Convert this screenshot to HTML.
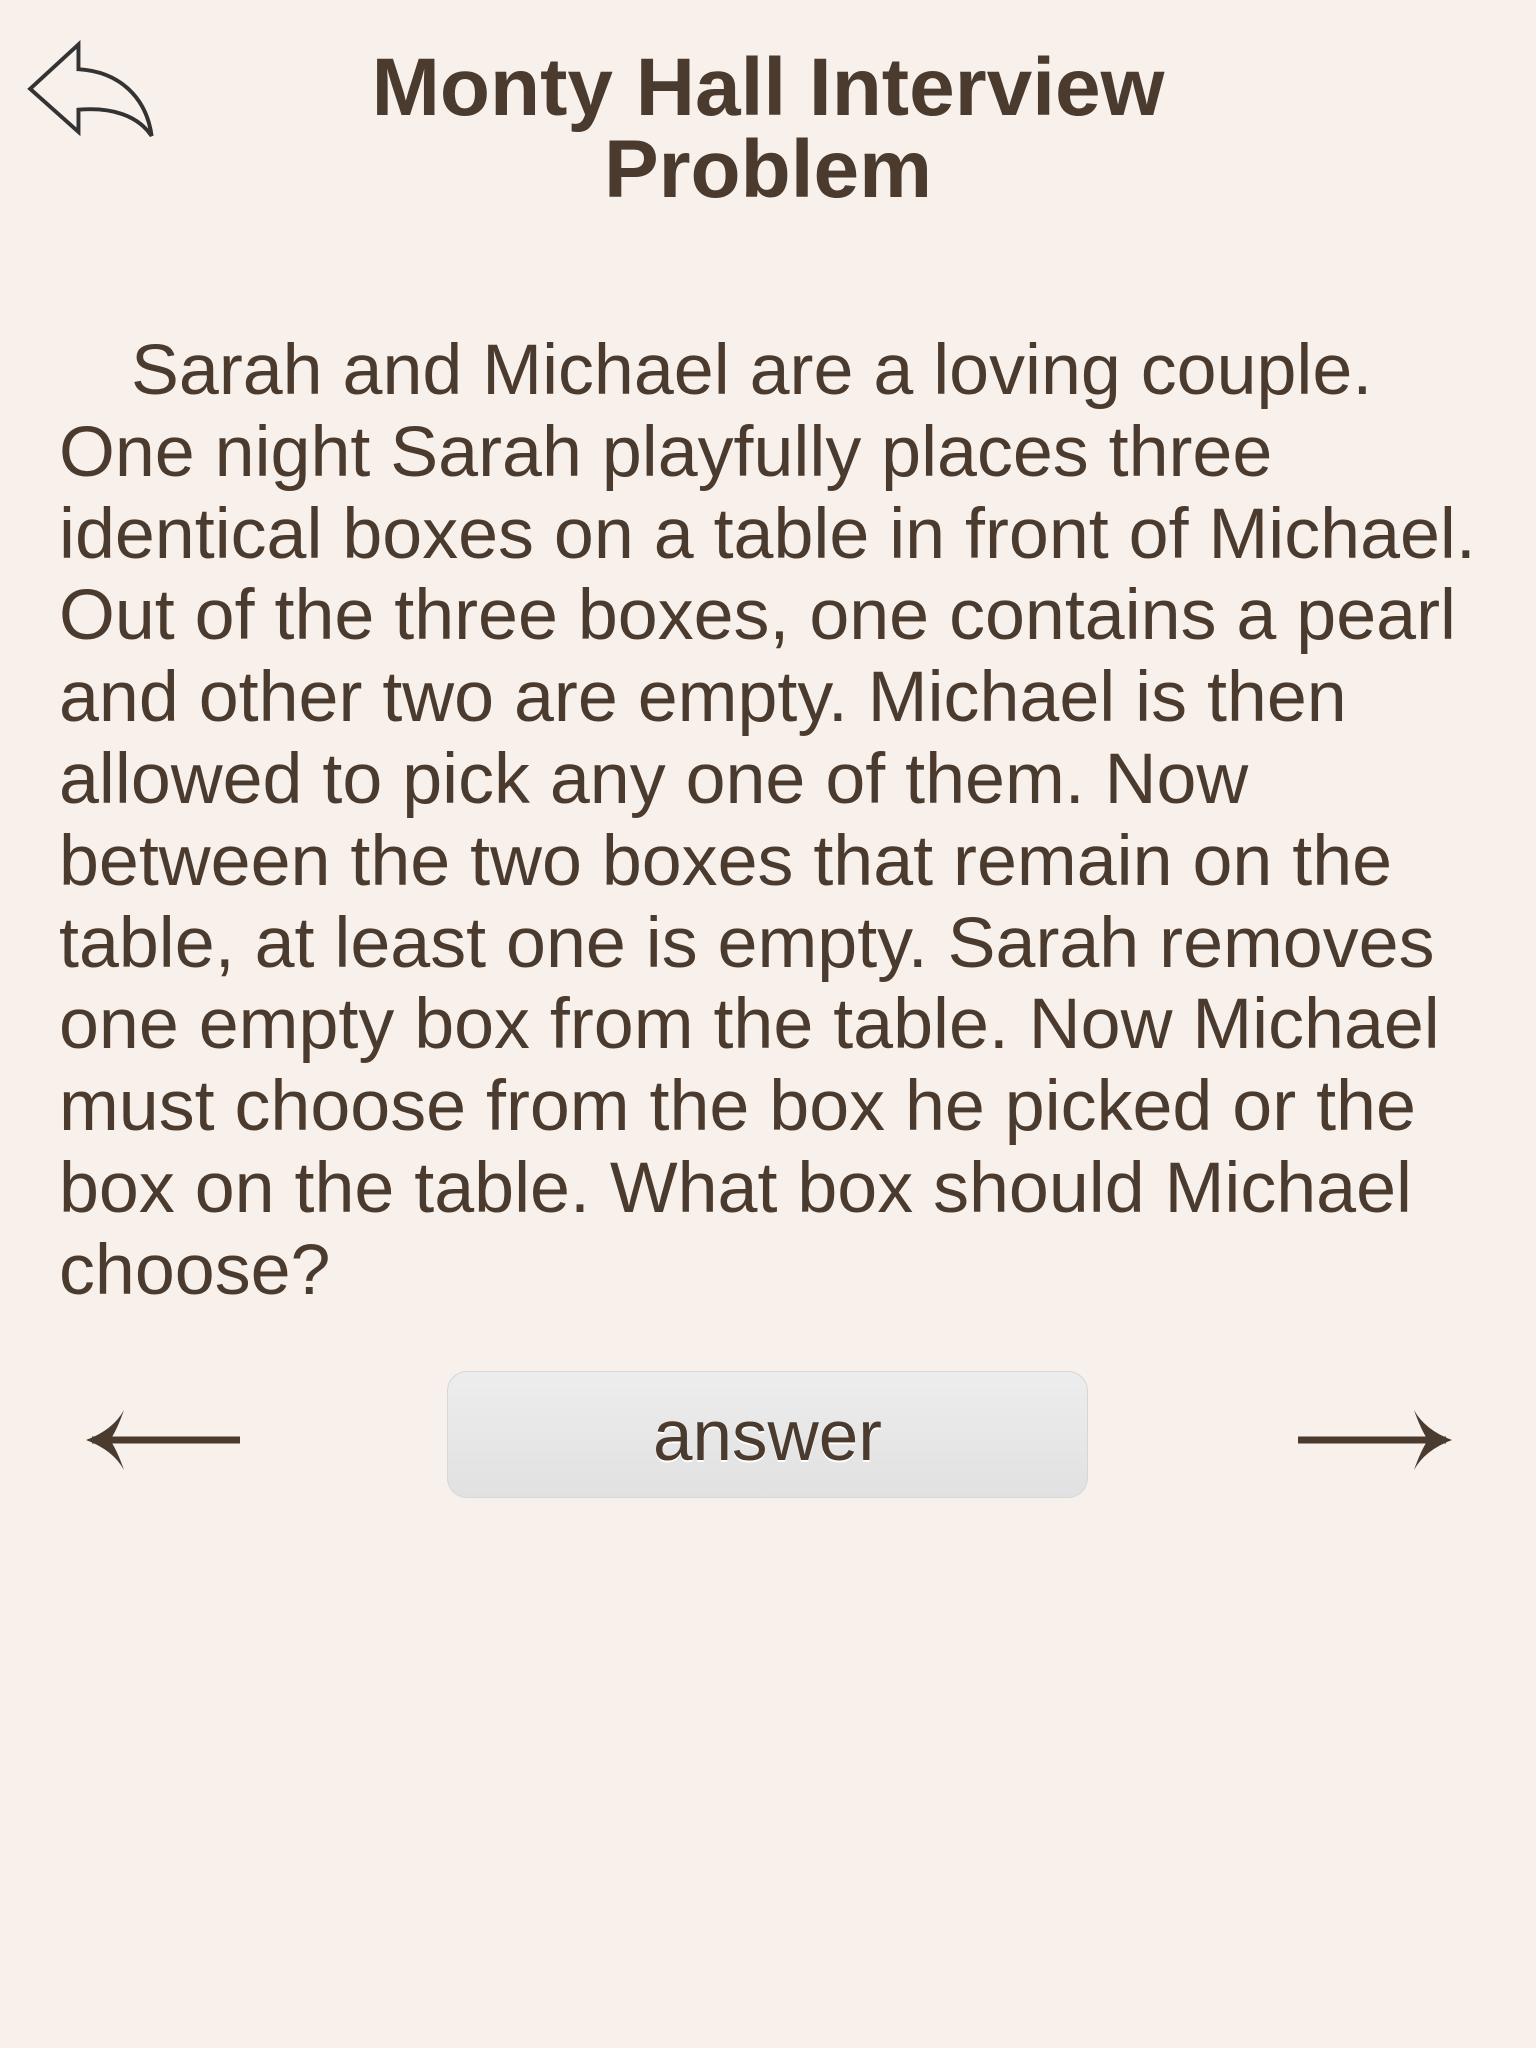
<!DOCTYPE html>
<html><head><meta charset="utf-8"><style>
html,body{margin:0;padding:0}
body{width:1536px;height:2048px;background:#f8f0eb;position:relative;overflow:hidden;font-family:"Liberation Sans",Arial,sans-serif;color:#4a3b2e}
.title{position:absolute;left:0;width:1536px;top:47px;text-align:center;font-weight:bold;font-size:82px;line-height:82px}
.body{position:absolute;left:59px;top:330px;font-size:71.8px;line-height:81.8px;white-space:nowrap}
.ind{display:inline-block;width:72px}
.btn{position:absolute;left:447px;top:1371px;width:641px;height:127px;border-radius:20px;background:linear-gradient(#ededed,#e1e1e1);border:1px solid #d6d6d6;box-sizing:border-box;text-align:center;font-size:71px;line-height:129px;text-shadow:0 2px 0 #fff}
svg{position:absolute}
</style></head><body>
<svg style="left:0;top:0" width="170" height="160" viewBox="0 0 130 122.5"><path d="M60,34 L23,68 L60,101 L60,84 C85,82 105,88 116,104 C112,75 92,55 60,53 Z" fill="none" stroke="#333" stroke-width="3" stroke-linejoin="miter"/></svg>
<div class="title">Monty Hall Interview<br>Problem</div>
<div class="body"><span class="ind"></span>Sarah and Michael are a loving couple.<br>One night Sarah playfully places three<br>identical boxes on a table in front of Michael.<br>Out of the three boxes, one contains a pearl<br>and other two are empty. Michael is then<br>allowed to pick any one of them. Now<br>between the two boxes that remain on the<br>table, at least one is empty. Sarah removes<br>one empty box from the table. Now Michael<br>must choose from the box he picked or the<br>box on the table. What box should Michael<br>choose?</div>
<svg style="left:80px;top:1405px" width="170" height="70" viewBox="0 0 170 70"><path d="M12,35 L160,35" stroke="#4a3b2e" stroke-width="7"/><path d="M44,5 Q33,25 6,35 Q33,45 44,65 Q37,45 30,35 Q37,25 44,5 Z" fill="#4a3b2e"/></svg>
<svg style="left:1290px;top:1405px" width="170" height="70" viewBox="0 0 170 70"><path d="M8,35 L156,35" stroke="#4a3b2e" stroke-width="7"/><path d="M124,5 Q135,25 162,35 Q135,45 124,65 Q131,45 138,35 Q131,25 124,5 Z" fill="#4a3b2e"/></svg>
<div class="btn">answer</div>
</body></html>
